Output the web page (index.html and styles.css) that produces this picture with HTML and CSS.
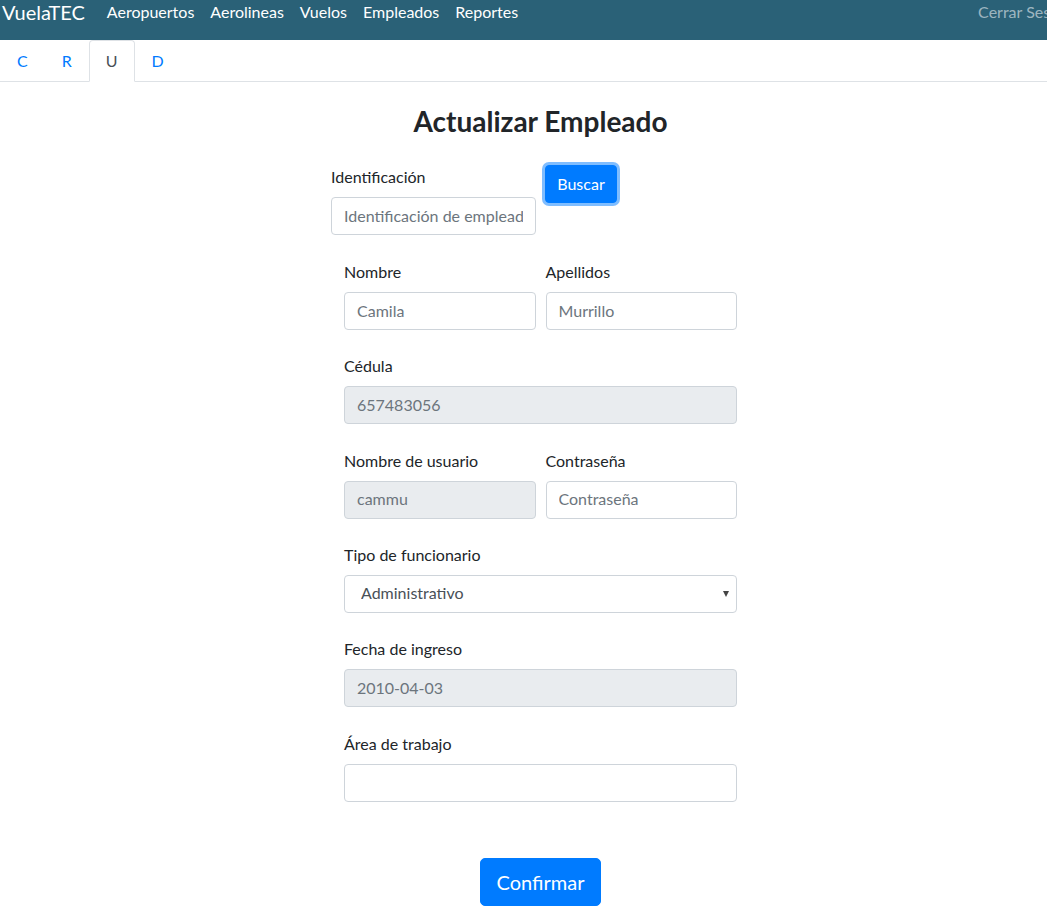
FILE: index.html
```html
<!DOCTYPE html>
<html lang="es">
<head>
<meta charset="utf-8">
<title>VuelaTEC - Actualizar Empleado</title>
<link rel="stylesheet" href="styles.css">
</head>
<body>
<div class="page">
  <nav class="navbar">
    <a class="brand" href="#">VuelaTEC</a>
    <ul class="nav-links">
      <li><a href="#">Aeropuertos</a></li>
      <li><a href="#">Aerolineas</a></li>
      <li><a href="#">Vuelos</a></li>
      <li><a href="#">Empleados</a></li>
      <li><a href="#">Reportes</a></li>
    </ul>
    <a class="logout" href="#">Cerrar Sesión</a>
  </nav>

  <ul class="tabs">
    <li><a class="tab" href="#">C</a></li>
    <li><a class="tab" href="#">R</a></li>
    <li><a class="tab active" href="#">U</a></li>
    <li><a class="tab" href="#">D</a></li>
  </ul>

  <main class="content">
    <h3 class="title">Actualizar Empleado</h3>

    <form class="form">
      <div class="search-row">
        <div class="search-col">
          <label class="label" for="ident">Identificación</label>
          <input class="input" id="ident" type="text" placeholder="Identificación de empleado">
        </div>
        <button type="button" class="btn btn-search">Buscar</button>
      </div>

      <div class="form-group two-col">
        <div class="col">
          <label class="label">Nombre</label>
          <input class="input" type="text" placeholder="Camila">
        </div>
        <div class="col">
          <label class="label">Apellidos</label>
          <input class="input" type="text" placeholder="Murrillo">
        </div>
      </div>

      <div class="form-group">
        <label class="label">Cédula</label>
        <input class="input" type="text" placeholder="657483056" disabled>
      </div>

      <div class="form-group two-col">
        <div class="col">
          <label class="label">Nombre de usuario</label>
          <input class="input" type="text" placeholder="cammu" disabled>
        </div>
        <div class="col">
          <label class="label">Contraseña</label>
          <input class="input" type="password" placeholder="Contraseña">
        </div>
      </div>

      <div class="form-group">
        <label class="label">Tipo de funcionario</label>
        <div class="select-wrap">
          <select class="input select">
            <option>Administrativo</option>
            <option>Piloto</option>
          </select>
          <span class="select-arrow"></span>
        </div>
      </div>

      <div class="form-group">
        <label class="label">Fecha de ingreso</label>
        <input class="input" type="text" placeholder="2010-04-03" disabled>
      </div>

      <div class="form-group">
        <label class="label">Área de trabajo</label>
        <input class="input" type="text">
      </div>

      <div class="actions">
        <button type="button" class="btn btn-lg">Confirmar</button>
      </div>
    </form>
  </main>
</div>
</body>
</html>
```

FILE: styles.css
```css
html, body {
  margin: 0;
  padding: 0;
}
body {
  overflow-x: hidden;
  font-family: Lato, "Open Sans", "Liberation Sans", sans-serif;
  font-size: 16px;
  line-height: 1.5;
  color: #212529;
  background: #fff;
}
.page {
  width: 1081px;
}
a { text-decoration: none; }

/* navbar */
.navbar {
  display: flex;
  align-items: flex-start;
  height: 40px;
  background: #2a6177;
  padding: 0 9px 0 2px;
  white-space: nowrap;
}
.brand {
  color: #fff;
  font-size: 20px;
  line-height: 24px;
  margin-right: 14px;
}
.nav-links {
  display: flex;
  list-style: none;
  margin: 0;
  padding: 0;
}
.nav-links a {
  display: block;
  color: #fff;
  font-size: 16px;
  line-height: 24px;
  padding: 0 8px;
}
.logout {
  margin-left: auto;
  color: rgba(255, 255, 255, 0.55);
  font-size: 16px;
  line-height: 24px;
}

/* tabs */
.tabs {
  display: flex;
  list-style: none;
  margin: 0;
  padding: 0;
  border-bottom: 1px solid #dee2e6;
}
.tabs li { margin-bottom: -1px; }
.tab {
  display: block;
  padding: 8px 16px;
  line-height: 24px;
  color: #007bff;
  border: 1px solid transparent;
  border-top-left-radius: 4px;
  border-top-right-radius: 4px;
}
.tab.active {
  color: #495057;
  border-color: #dee2e6 #dee2e6 #fff;
  background: #fff;
}

/* content */
.content {
  display: flex;
  flex-direction: column;
  align-items: center;
}
.title {
  margin: 22px 0 27px;
  font-size: 28px;
  line-height: 34px;
  font-weight: 700;
  color: #212529;
}
.form {
  width: 393px;
}
.search-row {
  display: flex;
  align-items: flex-start;
  gap: 9px;
  margin-left: -13px;
  margin-bottom: 25px;
}
.search-col {
  width: 205px;
}
.label {
  display: block;
  margin-bottom: 8px;
  line-height: 24px;
}
.input {
  display: block;
  box-sizing: border-box;
  width: 100%;
  height: 38px;
  padding: 5px 12px 7px;
  font: inherit;
  font-size: 16px;
  line-height: 24px;
  color: #495057;
  background: #fff;
  border: 1px solid #ced4da;
  border-radius: 4px;
}
.input::placeholder {
  color: #6c757d;
  opacity: 1;
}
.input:disabled {
  background: #e9ecef;
}
.form-group {
  margin-bottom: 24.33px;
}
.two-col {
  display: flex;
  gap: 10px;
}
.two-col .col {
  flex: 1;
  min-width: 0;
}
.select-wrap {
  position: relative;
}
.select {
  appearance: none;
  -webkit-appearance: none;
  padding-left: 16px;
}
.select-arrow {
  position: absolute;
  right: 8px;
  top: 16px;
  width: 0;
  height: 0;
  border-left: 3px solid transparent;
  border-right: 3px solid transparent;
  border-top: 6px solid #444;
  pointer-events: none;
}
.btn {
  font: inherit;
  font-size: 16px;
  line-height: 24px;
  color: #fff;
  background: #007bff;
  border: 1px solid #007bff;
  border-radius: 4px;
  padding: 6px 12px;
  cursor: pointer;
}
.btn-search {
  width: 72px;
  padding: 6px 0;
  box-shadow: 0 0 0 3px rgba(0, 123, 255, 0.5);
}
.actions {
  display: flex;
  justify-content: center;
  padding-top: 32px;
}
.btn-lg {
  font-size: 20px;
  line-height: 30px;
  padding: 8px 16px;
  border-radius: 5px;
}
```
